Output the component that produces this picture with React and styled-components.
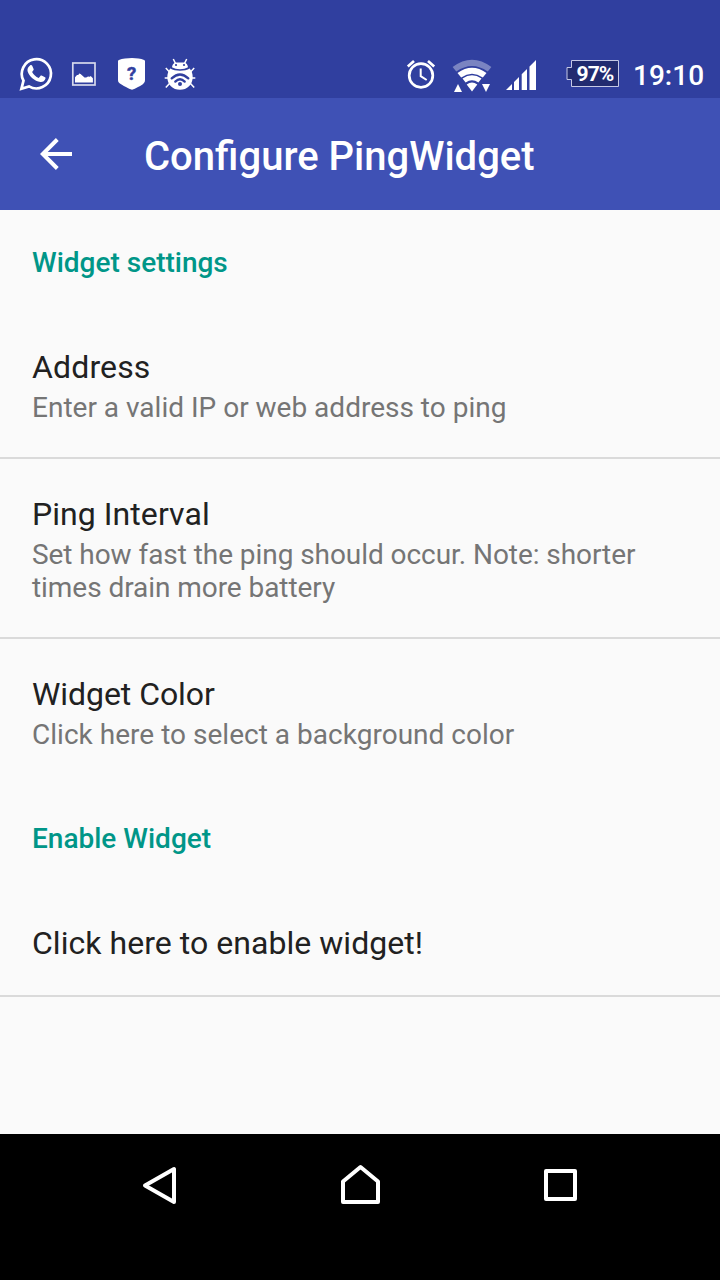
import React from "react";
import styled, { createGlobalStyle } from "styled-components";

const GlobalStyle = createGlobalStyle`
  * { box-sizing: border-box; }
  body { margin: 0; background: #000; font-family: Roboto, "Noto Sans", sans-serif; }
`;

const Screen = styled.div`
  display: flex;
  flex-direction: column;
  width: 720px;
  height: 1280px;
  overflow: hidden;
  background: #fafafa;
`;

const StatusBar = styled.header`
  display: flex;
  justify-content: space-between;
  align-items: flex-start;
  height: 98px;
  padding: 56px 16px 0 20px;
  background: #303f9f;
  color: #fff;
`;

const StatusGroup = styled.div`
  display: flex;
  align-items: flex-start;
  gap: ${(p) => p.$gap}px;
`;

const StatusIcon = styled.svg`
  display: block;
  flex: none;
  height: 36px;
  overflow: visible;
  fill: #fff;
`;

const Battery = styled.div`
  display: grid;
  margin-left: 15px;
  > * { grid-area: 1 / 1; }
`;

const BatteryText = styled.span`
  padding: 6px 5.5px 0 0;
  justify-self: end;
  font-size: 21px;
  font-weight: 700;
  line-height: 24px;
  letter-spacing: -0.9px;
`;

const Clock = styled.time`
  width: 71px;
  padding-top: 3px;
  font-size: 28px;
  font-weight: 500;
  line-height: 34px;
  white-space: nowrap;
`;

const AppBar = styled.div`
  display: flex;
  align-items: center;
  height: 112px;
  padding-left: 40px;
  background: #3f51b5;
  color: #fff;
`;

const BackButton = styled.button`
  width: 32px;
  height: 32px;
  margin-right: 72px;
  padding: 0;
  border: 0;
  background: none;
`;

const Glyph = styled.svg`
  display: block;
  fill: none;
  stroke: #fff;
  stroke-width: 4;
  stroke-linejoin: round;
`;

const Title = styled.h1`
  margin: 6px 0 0;
  font-size: 40px;
  font-weight: 500;
  line-height: 48px;
`;

const Settings = styled.main`
  flex: 1;
`;

const Category = styled.h2`
  height: 102px;
  margin: 0;
  padding: 36px 32px 0;
  color: #009688;
  font-size: 28px;
  font-weight: 500;
  line-height: 33px;
`;

const Preference = styled.div`
  padding: 36px 32px 33px;
  border-bottom: ${(p) => (p.$divided ? "2px solid #dadada" : "2px solid transparent")};
`;

const PreferenceTitle = styled.div`
  color: #212121;
  font-size: 32px;
  line-height: 38px;
  letter-spacing: ${(p) => p.$tracking}px;
`;

const Summary = styled.div`
  margin-top: 5px;
  color: #757575;
  font-size: 28px;
  line-height: 33px;
  letter-spacing: ${(p) => p.$tracking}px;
`;

const NavBar = styled.nav`
  display: flex;
  justify-content: center;
  height: 146px;
  padding-top: 28px;
  gap: 152px;
  background: #000;
`;

const NavButton = styled.button`
  width: 48px;
  height: 48px;
  padding: 0;
  border: 0;
  background: none;
`;

const WhatsApp = () => (
  <StatusIcon width="32" viewBox="20.5 56.3 32 36">
    <path d="M21.900 89.100L24 81A14.600 14.600 0 1 1 29.500 86.700z" fill="none" stroke="#fff" strokeWidth="2.700" />
    <path d="M30.500 65.700c.7-.5 1.800-.5 2.200.3l1.400 3.300c.2.5.1.9-.2 1.300l-1.300 1.600c1.600 2.900 3.600 4.700 6.600 6l1.700-2c.3-.4.8-.5 1.200-.3l3.400 1.700c.6.3.6.8.4 1.500-.6 2.200-2.700 3.400-4.900 3.200-6.200-.9-11.200-5.400-12.900-10.700-.6-2.300.6-4.600 2.400-5.900z" />
  </StatusIcon>
);

const Picture = () => (
  <StatusIcon width="32" viewBox="68 56 32 36">
    <rect x="72.800" y="63" width="22.200" height="22" fill="none" stroke="#fff" strokeOpacity=".8" strokeWidth="1.700" />
    <path d="M75 82.400V77.300l2-2.200 1.300-.2.900-1.400 1.400.5 3.900 3.400h1.700l1.800-.9 1.800.2.900-.8 2.200 2.300v4.200z" />
  </StatusIcon>
);

const Shield = () => (
  <StatusIcon width="32" viewBox="116 56 32 36">
    <path d="M132 58c4.500 0 8.800.7 12.100 1.900.6.2.9.6.9 1.200V80c0 2-1 3.300-2.500 4.400-3 2-6.700 3.800-10.500 5.400-3.800-1.600-7.500-3.400-10.500-5.400C119 83.300 118 82 118 80V61.100c0-.6.3-1 .9-1.200C122.200 58.700 127.500 58 132 58z" />
    <text x="131.700" y="80" textAnchor="middle" fontFamily="Roboto" fontWeight="700" fontSize="18.500" fill="#303f9f" stroke="#303f9f" strokeWidth=".5">?</text>
  </StatusIcon>
);

const Bug = () => (
  <StatusIcon width="32" viewBox="164 56 32 36">
    <path d="M172 67.300c.2-2.300 1.400-4 3.400-4.800h9.200c2 .8 3.200 2.500 3.400 4.800-2.100 1.300-4.900 1.900-8 1.900s-5.900-.6-8-1.900z" />
    <path d="M175.500 63.500l-2.200-4.500M184.500 63.500l2.200-4.500M169.500 72l-3.700-4M190.500 72l3.700-4M168.500 78H164.700M191.500 78h3.800M169.500 83.500l-3.700 4M190.500 83.500l3.700 4" stroke="#fff" strokeWidth="1.500" fill="none" />
    <path d="M170.300 68.500c2.400 1.500 5.900 2.200 9.700 2.200s7.300-.7 9.700-2.200c2 2.400 3 5.400 3 8.700 0 7.200-5.600 12.600-12.700 12.600s-12.700-5.400-12.700-12.600c0-3.300 1-6.300 3-8.700z" />
    <circle cx="176" cy="65" r="1.100" fill="#303f9f" />
    <circle cx="184" cy="65" r="1.100" fill="#303f9f" />
    <g fill="none" stroke="#303f9f" strokeWidth="2.300" strokeLinecap="round">
      <path d="M171.700 78.400Q180 70.600 188.300 78.400" />
      <path d="M175.300 81.600Q180 77 184.700 81.600" />
    </g>
    <circle cx="180" cy="83.900" r="2" fill="#303f9f" />
  </StatusIcon>
);

const Alarm = () => (
  <StatusIcon width="33" viewBox="405 56 33 36">
    <g fill="none" stroke="#fff" strokeWidth="2.700">
      <circle cx="421" cy="75.500" r="11.800" />
      <path d="M407.800 66.400L414 61M428 61l6.200 5.400" />
      <path d="M420.700 68.500v7.600l6 3.900" strokeWidth="2" />
    </g>
  </StatusIcon>
);

const Wifi = () => (
  <StatusIcon width="40" viewBox="452 56 40 36">
    <path d="M452.600 67.100Q472 52.500 491.400 67.100L487.700 71.500Q472 60.500 456.300 71.500z" opacity=".36" />
    <path d="M457.500 73Q472 62.500 486.500 73L482.800 77.400Q472 70 461.200 77.400z" />
    <path d="M462.500 78.600Q472 71.900 481.500 78.600L478.400 82.400Q472 78 465.600 82.400z" />
    <path d="M466.700 84.400Q472 80.800 477.300 84.400L472 91.500z" />
    <path d="M454 92l4-8 4 8zM482 84h8l-4 8z" />
  </StatusIcon>
);

const Signal = () => (
  <StatusIcon width="31" viewBox="506 56 31 36">
    <path d="M506 90l6-6v6zM514 82l5-5v13h-5zM521.700 74.300l5.300-5.300v21h-5.300zM529.500 66.500l6.500-6.500v30h-6.500z" />
  </StatusIcon>
);

const BackIcon = () => (
  <Glyph width="32" height="32" viewBox="0 0 32 32">
    <path d="M32 16H4M17.300 1.500L2.800 16L17.300 30.500" strokeLinejoin="miter" />
  </Glyph>
);

const Item = ({ title, children, divided = true, titleTracking = 0, tracking = 0 }) => (
  <Preference $divided={divided}>
    <PreferenceTitle $tracking={titleTracking}>{title}</PreferenceTitle>
    {children && <Summary $tracking={tracking}>{children}</Summary>}
  </Preference>
);

export default function App() {
  return (
    <Screen>
      <GlobalStyle />
      <StatusBar>
        <StatusGroup $gap={16}>
          <WhatsApp />
          <Picture />
          <Shield />
          <Bug />
        </StatusGroup>
        <StatusGroup $gap={14}>
          <Alarm />
          <Wifi />
          <Signal />
          <Battery>
            <StatusIcon width="53" viewBox="566 56 53 36">
              <path d="M571.500 60.500h47v26h-47v-7h-4.500v-12h4.500z" fill="#212b70" stroke="#c5c9e5" />
            </StatusIcon>
            <BatteryText>97%</BatteryText>
          </Battery>
          <Clock>19:10</Clock>
        </StatusGroup>
      </StatusBar>
      <AppBar>
        <BackButton aria-label="Back">
          <BackIcon />
        </BackButton>
        <Title>Configure PingWidget</Title>
      </AppBar>
      <Settings>
        <Category>Widget settings</Category>
        <Item title="Address" titleTracking={0.14}>
          Enter a valid IP or web address to ping
        </Item>
        <Item title="Ping Interval" titleTracking={0.06} tracking={-0.06}>
          Set how fast the ping should occur. Note: shorter times drain more battery
        </Item>
        <Item title="Widget Color" titleTracking={-0.06} tracking={0.02} divided={false}>
          Click here to select a background color
        </Item>
        <Category>Enable Widget</Category>
        <Item title="Click here to enable widget!" titleTracking={0.04} />
      </Settings>
      <NavBar>
        <NavButton aria-label="Back">
          <Glyph width="48" height="48" viewBox="136 1162 48 48">
            <path d="M174 1169v33L145 1185.500z" />
          </Glyph>
        </NavButton>
        <NavButton aria-label="Home">
          <Glyph width="48" height="48" viewBox="336 1162 48 48">
            <path d="M343 1202v-20.500L360.500 1167L378 1181.500V1202z" />
          </Glyph>
        </NavButton>
        <NavButton aria-label="Recent apps">
          <Glyph width="48" height="48" viewBox="536 1162 48 48">
            <rect x="546" y="1171" width="29" height="28" />
          </Glyph>
        </NavButton>
      </NavBar>
    </Screen>
  );
}
